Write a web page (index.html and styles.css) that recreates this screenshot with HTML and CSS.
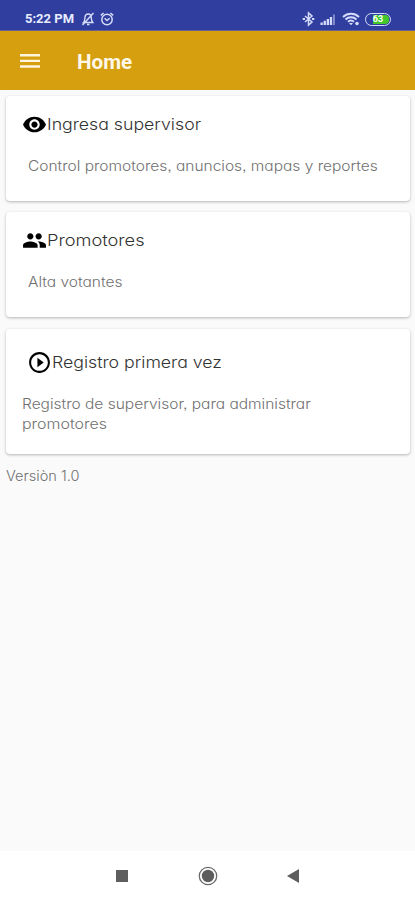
FILE: index.html
```html
<!DOCTYPE html>
<html lang="es">
<head>
<meta charset="utf-8">
<meta name="viewport" content="width=device-width">
<title>Home</title>
<link rel="stylesheet" href="styles.css">
</head>
<body>
<header class="status">
  <span class="time">5:22 PM</span>
  <svg class="bell" width="14" height="16" viewBox="0 0 14 16" fill="none" stroke="#d5dbfa" stroke-width="1.4"><path d="M2.500 11.500C4 10 3.700 8 4 6c.3-2 1.500-3 3.200-3S10.300 4.500 10.300 7c0 2 .3 3 1.500 4.500zM6 13.500h2.500M1.500 14 12.500 2"/></svg>
  <svg class="alarm" width="14" height="16" viewBox="0 0 14 16" fill="none" stroke="#d5dbfa" stroke-width="1.500"><circle cx="7" cy="8.500" r="5.200"/><path d="M.8 4.300 3.600 2M13.200 4.300 10.400 2M4.600 7.300 7 9.500l2.600-2.200"/></svg>
  <span class="grow"></span>
  <svg class="bluetooth" width="13" height="16" viewBox="0 0 13 16" fill="none" stroke="#d5dbfa" stroke-width="1.500"><path d="m3 5 7 6-3.500 3V2L10 5l-7 6"/><path d="M.7 8h2.300M10 8h2.300" stroke-width="2.200"/></svg>
  <svg class="signal" width="16" height="16" viewBox="0 0 16 16" fill="#d5dbfa"><path d="M.5 11.500h2.300V14H.5zM3.600 9.800h2.300V14H3.600zM6.700 8H9v6H6.700zM9.800 6h2.300v8H9.800z"/><path d="M12.900 3.500h2V14h-2z" opacity=".5"/></svg>
  <svg class="wifi" width="18" height="16" viewBox="0 0 18 16" fill="none" stroke="#d5dbfa" stroke-width="2"><path d="M1 6c4.500-4.200 11.500-4.200 16 0M3.500 8.500c3.200-2.900 7.800-2.900 11 0M6 10.800c1.800-1.600 4.200-1.600 6 0"/><path d="M7 12h4l-2 2.300z" fill="#d5dbfa" stroke="none"/><circle cx="15" cy="12.500" r="1.800" fill="#d5dbfa" stroke="none"/></svg>
  <span class="battery"><span class="charge">63</span></span>
</header>
<div class="toolbar">
  <svg class="menu" width="20" height="16" viewBox="0 0 20 16" fill="#fff4dc"><path d="M0 1h20v2.400H0zM0 6.700h20v2.400H0zM0 12.300h20v2.400H0z"/></svg>
  <h1>Home</h1>
</div>
<main>
  <section class="card">
    <h2><svg width="25" height="25" viewBox="0 0 24 24"><path d="M12 4.500C7 4.500 2.730 7.610 1 12c1.730 4.390 6 7.500 11 7.500s9.270-3.110 11-7.500c-1.730-4.390-6-7.500-11-7.500zM12 17c-2.760 0-5-2.240-5-5s2.240-5 5-5 5 2.240 5 5-2.240 5-5 5zm0-8c-1.660 0-3 1.340-3 3s1.340 3 3 3 3-1.340 3-3-1.340-3-3-3z"/></svg><span class="wide">Ingresa supervisor</span></h2>
    <p><span class="wide">Control promotores, anuncios, mapas y reportes</span></p>
  </section>
  <section class="card">
    <h2><svg width="25" height="25" viewBox="0 0 24 24"><path d="M16 11c1.660 0 2.990-1.340 2.990-3S17.660 5 16 5s-3 1.340-3 3 1.340 3 3 3zm-8 0c1.660 0 2.990-1.340 2.990-3S9.660 5 8 5 5 6.340 5 8s1.340 3 3 3zm0 2c-2.330 0-7 1.170-7 3.500V19h14v-2.500c0-2.330-4.670-3.500-7-3.500zm8 0c-.29 0-.62.02-.97.05 1.160.84 1.970 1.970 1.970 3.450V19h6v-2.500c0-2.330-4.670-3.500-7-3.500z"/></svg><span class="wide wider">Promotores</span></h2>
    <p><span class="wide">Alta votantes</span></p>
  </section>
  <section class="card register">
    <h2><svg width="25" height="25" viewBox="0 0 24 24"><path d="M10 16.500l6-4.500-6-4.500v9zM12 2C6.480 2 2 6.480 2 12s4.480 10 10 10 10-4.480 10-10S17.520 2 12 2zm0 18c-4.410 0-8-3.590-8-8s3.590-8 8-8 8 3.590 8 8-3.590 8-8 8z"/></svg><span class="wide">Registro primera vez</span></h2>
    <p><span class="wide">Registro de supervisor, para administrar</span><br><span class="wide wider">promotores</span></p>
  </section>
  <div class="version"><span class="narrow">Versiòn 1.0</span></div>
</main>
<nav>
  <svg width="12" height="12" viewBox="0 0 12 12"><path d="M0 0h12v12H0z" fill="#5e5e5e"/></svg>
  <svg width="20" height="20" viewBox="0 0 20 20"><circle cx="10" cy="10" r="8.700" fill="none" stroke="#6b6b6b" stroke-width="1.300"/><circle cx="10" cy="10" r="6.200" fill="#5e5e5e"/></svg>
  <svg width="12" height="14" viewBox="0 0 12 14"><path d="M12 0v14L0 7z" fill="#5e5e5e"/></svg>
</nav>
</body>
</html>
```
FILE: styles.css
```css
* { box-sizing: border-box; }
body {
  margin: 0;
  height: 900px;
  display: flex;
  flex-direction: column;
  background: #fafafa;
  font-family: Inter, "Open Sans", sans-serif;
  font-feature-settings: "cv11", "ss03";
  overflow: hidden;
}
svg { display: block; flex: none; }
.status {
  height: 31px;
  padding: 8px 24px 0 25px;
  display: flex;
  align-items: center;
  background: #303f9f;
  border-bottom: 1px solid #68608a;
}
.time {
  width: 56px;
  font: 700 13px/16px Roboto, sans-serif;
  color: #e8ecff;
  white-space: nowrap;
}
.alarm { margin-left: 5px; }
.grow { flex: 1; }
.signal { margin-left: 5px; }
.wifi { margin: 0 5px 0 6px; }
.battery {
  width: 26px;
  height: 13px;
  padding: 1px;
  border: 1.5px solid #d5dbfa;
  border-radius: 7px;
}
.charge {
  display: block;
  height: 9px;
  border-radius: 4px;
  background: linear-gradient(90deg, #303f9f 25%, #43c92c 25%);
  font: 700 9px/9px Roboto, sans-serif;
  text-align: center;
  color: #fff;
}
.toolbar {
  height: 59px;
  padding: 0 20px;
  display: flex;
  align-items: center;
  background: #d59f10;
}
.toolbar h1 {
  margin: 3px 0 0 37px;
  font: 700 20.6px/24px Roboto, sans-serif;
  color: #fff8e8;
}
main {
  flex: 1;
  padding: 6px 5px 0 6px;
}
.card {
  height: 105px;
  margin-bottom: 11px;
  padding: 16px 16px 0;
  background: #fff;
  border-radius: 4px;
  box-shadow: 0 1px 3px rgba(0, 0, 0, .28);
}
.card h2 {
  margin: 0;
  height: 25px;
  display: flex;
  font-size: 16px;
  line-height: 24px;
  font-weight: 300;
  color: #333;
  white-space: nowrap;
}
.card p {
  margin: 19px 0 0 6px;
  font-size: 14px;
  line-height: 20px;
  font-weight: 300;
  color: #707070;
  white-space: nowrap;
}
.wide, .narrow {
  display: inline-block;
  transform: scaleX(1.107);
  transform-origin: left center;
}
.wider { transform: scaleX(1.14); }
.narrow { transform: scaleX(1.04); }
.card + .card { margin-bottom: 12px; }
.card.register {
  height: 125px;
  padding-top: 21px;
}
.register h2 { margin-left: 5px; }
.register p { margin: 19px 0 0; }
.version {
  font-size: 14px;
  line-height: 20px;
  font-weight: 300;
  color: #707070;
}
nav {
  height: 49px;
  padding: 0 116px;
  display: flex;
  align-items: center;
  justify-content: space-between;
  background: #fff;
}
```
